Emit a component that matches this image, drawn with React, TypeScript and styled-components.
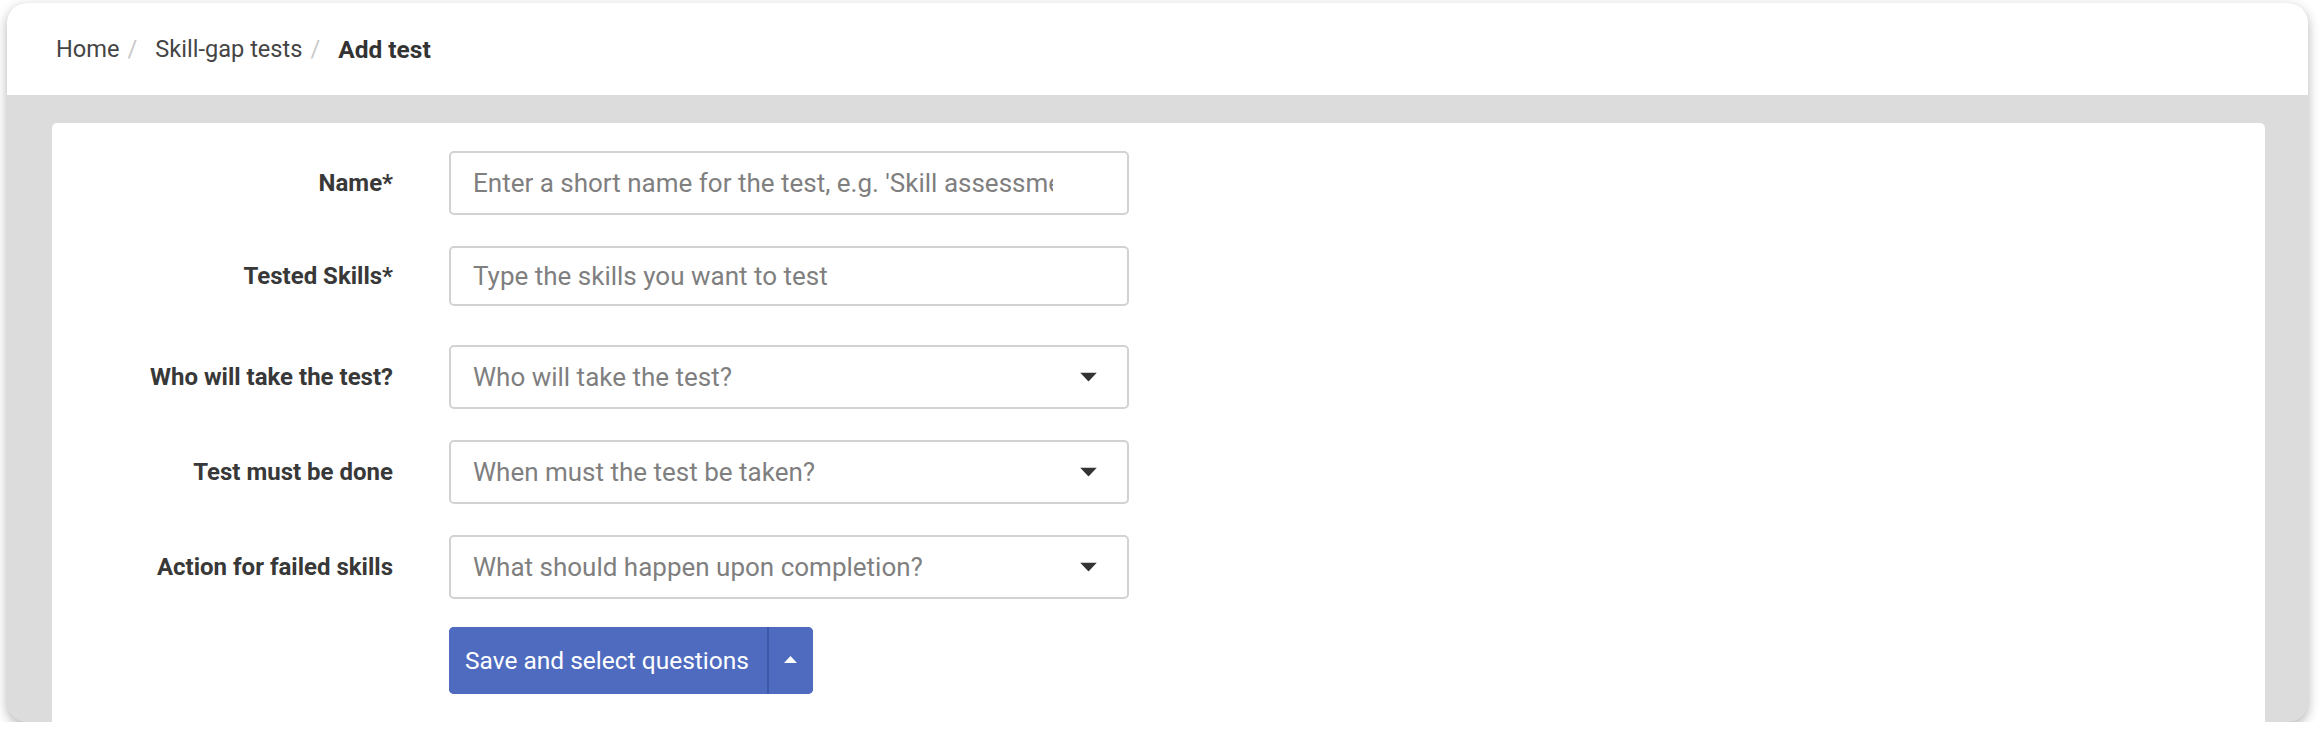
import React from "react";
import styled, { createGlobalStyle } from "styled-components";

const GlobalStyle = createGlobalStyle`
  html, body {
    margin: 0;
    padding: 0;
    background: #ffffff;
    font-family: Roboto, "Liberation Sans", sans-serif;
  }
  * {
    box-sizing: border-box;
  }
`;

interface IField {
  label: string;
  placeholder: string;
  kind: "text" | "select";
  height?: number;
  offset?: number;
}

const fields: IField[] = [
  {
    label: "Name*",
    placeholder: "Enter a short name for the test, e.g. 'Skill assessment 2024'",
    kind: "text",
  },
  {
    label: "Tested Skills*",
    placeholder: "Type the skills you want to test",
    kind: "text",
    height: 60,
  },
  {
    label: "Who will take the test?",
    placeholder: "Who will take the test?",
    kind: "select",
    offset: 8,
  },
  {
    label: "Test must be done",
    placeholder: "When must the test be taken?",
    kind: "select",
  },
  {
    label: "Action for failed skills",
    placeholder: "What should happen upon completion?",
    kind: "select",
  },
];

const CaretDown = () => (
  <svg width="17" height="9" viewBox="0 0 17 9">
    <path d="M0 0 H17 L8.5 9 Z" fill="#333333" />
  </svg>
);

const CaretUp = () => (
  <svg width="13" height="7" viewBox="0 0 13 7">
    <path d="M0 7 H13 L6.5 0 Z" fill="#ffffff" />
  </svg>
);

const App = () => {
  return (
    <>
      <GlobalStyle />
      <Window>
        <Header>
          <Crumbs>
            <Crumb>Home</Crumb>
            <Sep>/</Sep>
            <Crumb>Skill-gap tests</Crumb>
            <Sep>/</Sep>
            <Crumb $current>Add test</Crumb>
          </Crumbs>
        </Header>
        <Body>
          <Card>
            <Form>
              {fields.map((f) => (
                <Row key={f.label} $offset={f.offset || 0}>
                  <Label>{f.label}</Label>
                  {f.kind === "text" ? (
                    <TextInput
                      type="text"
                      placeholder={f.placeholder}
                      $height={f.height || 64}
                    />
                  ) : (
                    <SelectWrap>
                      <Select defaultValue="">
                        <option value="" disabled>
                          {f.placeholder}
                        </option>
                      </Select>
                      <Arrow>
                        <CaretDown />
                      </Arrow>
                    </SelectWrap>
                  )}
                </Row>
              ))}
              <Row $offset={-3}>
                <span />
                <SplitButton>
                  <MainButton type="button">Save and select questions</MainButton>
                  <ToggleButton type="button">
                    <CaretUp />
                  </ToggleButton>
                </SplitButton>
              </Row>
            </Form>
          </Card>
        </Body>
      </Window>
    </>
  );
};

export default App;

const Window = styled.div`
  margin: 3px 16px 0 7px;
  height: 719px;
  border-radius: 20px;
  overflow: hidden;
  background: #dcdcdc;
  box-shadow: 0 4px 12px rgba(0, 0, 0, 0.3);
  display: flex;
  flex-direction: column;
`;

const Header = styled.header`
  height: 92px;
  flex-shrink: 0;
  background: #ffffff;
  display: flex;
  align-items: center;
  padding-left: 49px;
`;

const Crumbs = styled.nav`
  display: flex;
  align-items: center;
  font-size: 23.6px;
`;

const Crumb = styled.span<{ $current?: boolean }>`
  color: ${(p) => (p.$current ? "#333333" : "#454545")};
  font-weight: ${(p) => (p.$current ? 700 : 400)};
  font-size: ${(p) => (p.$current ? "24.5px" : "inherit")};
`;

const Sep = styled.span`
  color: #c9c9c9;
  margin: 0 18px 0 8px;
`;

const Body = styled.div`
  flex: 1;
  display: flex;
  padding: 28px 43px 0 45px;
  min-height: 0;
`;

const Card = styled.div`
  flex: 1;
  background: #ffffff;
  border-radius: 5px 5px 0 0;
  padding-top: 28px;
`;

const Form = styled.form`
  display: flex;
  flex-direction: column;
  gap: 31px;
`;

const Row = styled.div<{ $offset: number }>`
  display: grid;
  grid-template-columns: 341px 680px;
  column-gap: 56px;
  align-items: center;
  margin-top: ${(p) => p.$offset}px;
`;

const Label = styled.label`
  text-align: right;
  font-size: 24px;
  font-weight: 700;
  color: #383838;
`;

const fieldCss = `
  width: 680px;
  height: 64px;
  border: 2px solid #d2d2d2;
  border-radius: 5px;
  background: #ffffff;
  padding: 0 74px 0 22px;
  font-family: Roboto, "Liberation Sans", sans-serif;
  font-size: 26px;
  outline: none;
`;

const TextInput = styled.input<{ $height: number }>`
  ${fieldCss}
  height: ${(p) => p.$height}px;
  color: #333333;
  &::placeholder {
    color: #7f7f7f;
  }
`;

const SelectWrap = styled.div`
  position: relative;
  width: 680px;
`;

const Select = styled.select`
  ${fieldCss}
  appearance: none;
  color: #7f7f7f;
`;

const Arrow = styled.span`
  position: absolute;
  right: 32px;
  top: 50%;
  transform: translateY(-50%);
  display: flex;
  pointer-events: none;
`;

const SplitButton = styled.div`
  display: flex;
  width: max-content;
  height: 67px;
  border-radius: 5px;
  overflow: hidden;
  background: #4e6bbf;
`;

const MainButton = styled.button`
  border: none;
  background: #4e6bbf;
  color: #ffffff;
  font-family: Roboto, "Liberation Sans", sans-serif;
  font-size: 24.5px;
  padding: 0 18px 0 16px;
  border-right: 2px solid #3e57a6;
  cursor: pointer;
`;

const ToggleButton = styled.button`
  border: none;
  background: #4e6bbf;
  width: 44px;
  display: flex;
  align-items: center;
  justify-content: center;
  padding: 0 0 3px;
  cursor: pointer;
`;
